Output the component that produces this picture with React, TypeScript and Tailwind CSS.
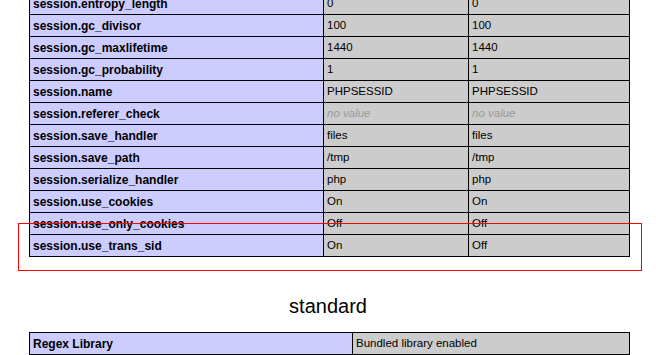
import React from "react";

type Row = { name: string; local: string; master: string };

const rows: Row[] = [
  { name: "session.entropy_length", local: "0", master: "0" },
  { name: "session.gc_divisor", local: "100", master: "100" },
  { name: "session.gc_maxlifetime", local: "1440", master: "1440" },
  { name: "session.gc_probability", local: "1", master: "1" },
  { name: "session.name", local: "PHPSESSID", master: "PHPSESSID" },
  { name: "session.referer_check", local: "", master: "" },
  { name: "session.save_handler", local: "files", master: "files" },
  { name: "session.save_path", local: "/tmp", master: "/tmp" },
  { name: "session.serialize_handler", local: "php", master: "php" },
  { name: "session.use_cookies", local: "On", master: "On" },
  { name: "session.use_only_cookies", local: "Off", master: "Off" },
  { name: "session.use_trans_sid", local: "On", master: "Off" },
];

function Value({ v }: { v: string }) {
  if (!v) return <i className="text-[#999999]">no value</i>;
  return <>{v}</>;
}

export default function App() {
  return (
    <div
      className="relative h-[355px] w-full overflow-hidden bg-white text-black"
      style={{ fontFamily: '"Liberation Sans", Arial, sans-serif' }}
    >
      <div className="-mt-[8px] ml-[29px] w-[601px] border-b border-r border-black">
        {rows.map((r) => (
          <div key={r.name} className="grid h-[22px] grid-cols-[294px_145px_161px]">
            <div className="flex items-center border-l border-t border-black bg-[#ccccff] pl-[3px] text-[12px] font-bold">
              {r.name}
            </div>
            <div className="flex items-center border-l border-t border-black bg-[#cccccc] pl-[3px] text-[11.5px]">
              <Value v={r.local} />
            </div>
            <div className="flex items-center border-l border-t border-black bg-[#cccccc] pl-[3px] text-[11.5px]">
              <Value v={r.master} />
            </div>
          </div>
        ))}
      </div>

      <h2 className="mt-[37px] text-center text-[20px] leading-[24px] font-normal">standard</h2>

      <div className="mt-[14px] ml-[29px] w-[601px] border-b border-r border-black">
        <div className="grid h-[22px] grid-cols-[323px_277px]">
          <div className="flex items-center border-l border-t border-black bg-[#ccccff] pl-[3px] text-[12px] font-bold">
            Regex Library
          </div>
          <div className="flex items-center border-l border-t border-black bg-[#cccccc] pl-[3px] text-[11.5px]">
            Bundled library enabled
          </div>
        </div>
      </div>

      {/* annotation box */}
      <div className="pointer-events-none absolute left-[18px] top-[223px] h-[48px] w-[624px] border border-[#ff0000]" />
    </div>
  );
}
